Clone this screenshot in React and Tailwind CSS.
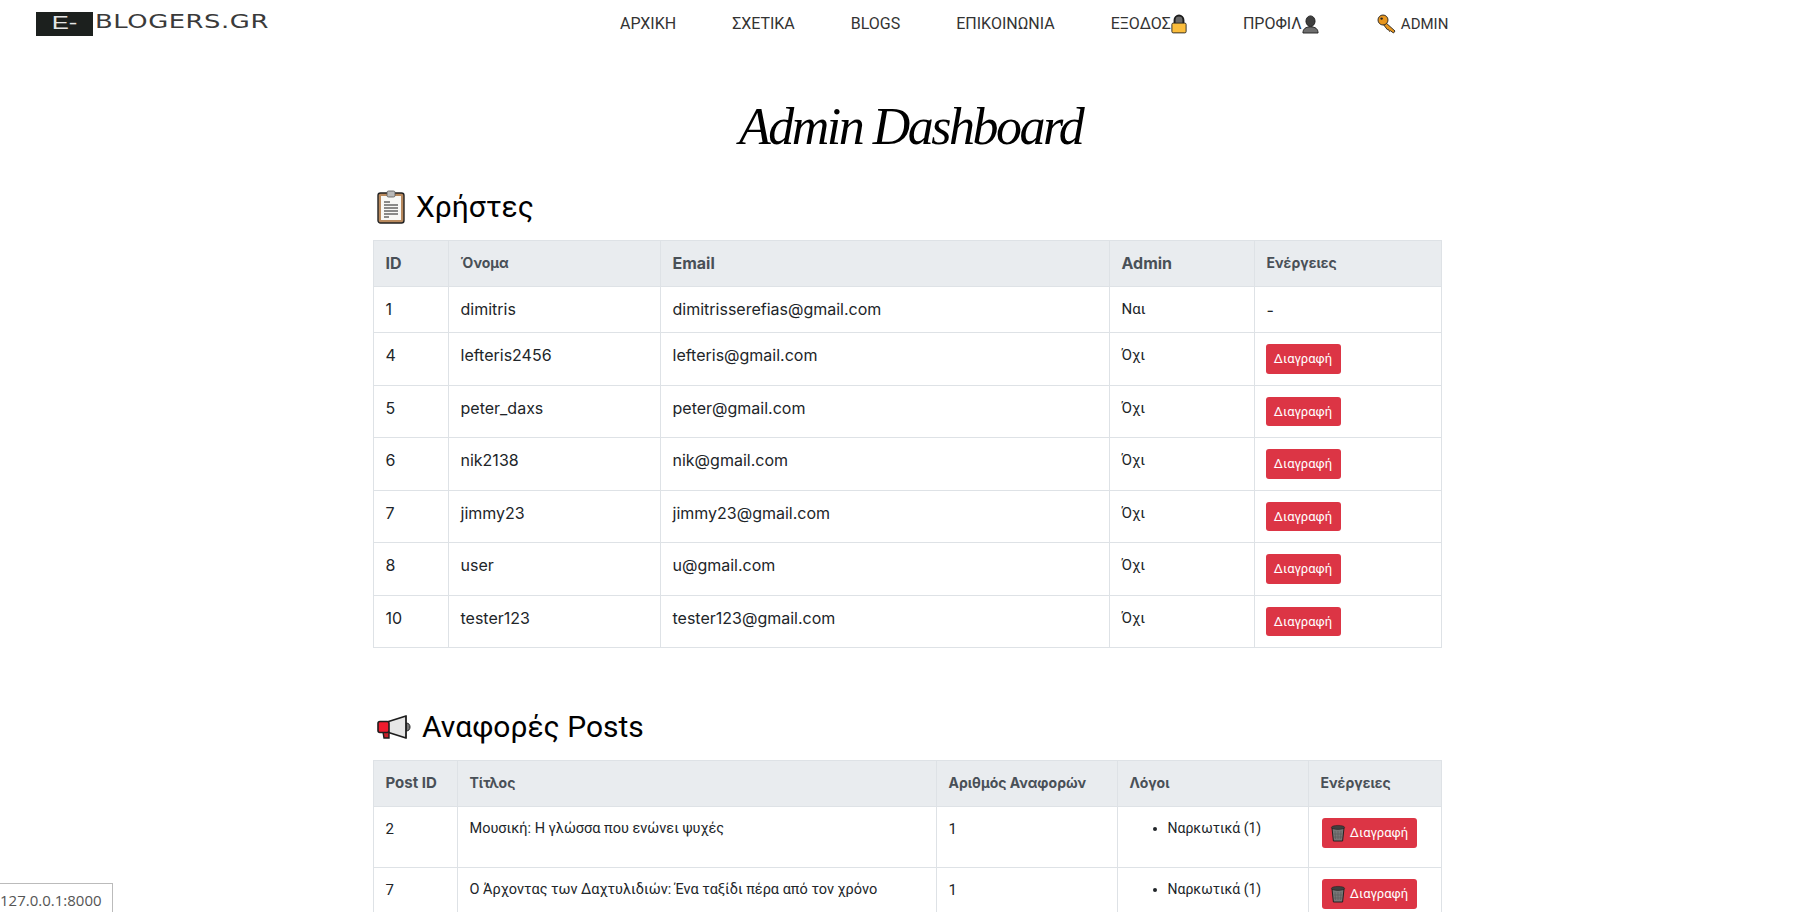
import React from 'react'

function LockIcon() {
  return (
    <svg viewBox="0 0 18 22" className="w-[16px] h-[20px] shrink-0">
      <path d="M4 11V6.5a5 5 0 0 1 10 0V11z" fill="#6a6a6a" stroke="#1d1d1d" strokeWidth="2.2" />
      <rect x="1" y="10" width="16" height="11" rx="1.5" fill="#fbbd3c" stroke="#222" strokeWidth="1" />
    </svg>
  )
}

function BustIcon() {
  return (
    <svg viewBox="0 0 18 20" className="w-[17px] h-[19px] shrink-0">
      <path d="M1 19c0-4.5 3-6.5 8-6.5s8 2 8 6.5z" fill="#6e6e6e" stroke="#222" strokeWidth="1" />
      <ellipse cx="9" cy="6.5" rx="4.8" ry="5.6" fill="#3f3f3f" stroke="#1d1d1d" strokeWidth="1" />
    </svg>
  )
}

function KeyIcon() {
  return (
    <svg viewBox="0 0 20 20" className="w-[20px] h-[20px] shrink-0">
      <path d="M8 8l10 9-1.5 2-3-2.2-1 .6-1.2-2-1 .2L6 10z" fill="#e8961e" stroke="#222" strokeWidth="0.9" strokeLinejoin="round" />
      <circle cx="6" cy="6" r="5" fill="#e8961e" stroke="#222" strokeWidth="0.9" />
      <circle cx="4.6" cy="4.6" r="1.2" fill="#222" />
    </svg>
  )
}

function ClipboardIcon() {
  return (
    <svg viewBox="0 0 28 34" className="w-[28px] h-[34px] shrink-0">
      <rect x="1" y="3" width="26" height="30" rx="2.5" fill="#b98a5e" stroke="#222" strokeWidth="1.4" />
      <rect x="4" y="6" width="20" height="24" fill="#f8f8f6" />
      <rect x="10" y="1" width="8" height="6" rx="1.5" fill="#b9b9b9" stroke="#555" strokeWidth="0.8" />
      <path d="M7 12h6M7 15h14M7 18h14M7 21h14M7 24h14M7 27h5" stroke="#666" strokeWidth="1.3" />
    </svg>
  )
}

function MegaphoneIcon() {
  return (
    <svg viewBox="0 0 34 26" className="w-[34px] h-[26px] shrink-0">
      <path d="M29 9c3 0 4 2 4 4s-1 4-4 4z" fill="#777" stroke="#222" strokeWidth="1" />
      <path d="M10 8L29 2v22L10 18z" fill="#e6e6e6" stroke="#1d1d1d" strokeWidth="1.8" strokeLinejoin="round" />
      <path d="M6 18h6v6H7z" fill="#c8202a" stroke="#1d1d1d" strokeWidth="1.4" />
      <rect x="1" y="7.5" width="11" height="11" rx="2" fill="#ee1c2e" stroke="#1d1d1d" strokeWidth="1.6" />
    </svg>
  )
}

function TrashIcon() {
  return (
    <svg viewBox="0 0 16 18" className="w-[16px] h-[18px] shrink-0">
      <path d="M2 4h12l-1.4 13H3.4z" fill="#777" stroke="#222" strokeWidth="1" />
      <ellipse cx="8" cy="3.4" rx="6.6" ry="2" fill="#3f3f3f" stroke="#222" strokeWidth="0.6" />
      <path d="M5 7l.6 8M8 7v8M11 7l-.6 8M3.5 10h9M4 13h8" stroke="#5c5c5c" strokeWidth="0.7" />
    </svg>
  )
}

const navItems = [
  { label: 'ΑΡΧΙΚΗ' },
  { label: 'ΣΧΕΤΙΚΑ' },
  { label: 'BLOGS' },
  { label: 'ΕΠΙΚΟΙΝΩΝΙΑ' },
  { label: 'ΕΞΟΔΟΣ', after: <LockIcon /> },
  { label: 'ΠΡΟΦΙΛ', after: <BustIcon /> },
  { label: 'ADMIN', before: <KeyIcon /> },
]

const users = [
  { id: 1, name: 'dimitris', email: 'dimitrisserefias@gmail.com', admin: true },
  { id: 4, name: 'lefteris2456', email: 'lefteris@gmail.com' },
  { id: 5, name: 'peter_daxs', email: 'peter@gmail.com' },
  { id: 6, name: 'nik2138', email: 'nik@gmail.com' },
  { id: 7, name: 'jimmy23', email: 'jimmy23@gmail.com' },
  { id: 8, name: 'user', email: 'u@gmail.com' },
  { id: 10, name: 'tester123', email: 'tester123@gmail.com' },
]

const reports = [
  { id: 2, title: 'Μουσική: Η γλώσσα που ενώνει ψυχές' },
  { id: 7, title: 'Ο Άρχοντας των Δαχτυλιδιών: Ένα ταξίδι πέρα από τον χρόνο' },
]

// latin text runs wider than the greek in the original, so the two get their own sizes
const th = 'border border-[#dee2e6] bg-[#e9ecef] px-[11.5px] h-[46px] text-left align-middle font-bold text-[#495057]'
const thLatin = `${th} text-[16px] pb-[2px]`
const thGreek = `${th} text-[14px] pb-[2px]`
const td = 'border border-[#dee2e6] px-[11.5px] align-top text-[#212529]'
const tdLatin = `${td} pt-[10px] text-[16px]`
const tdGreek = `${td} pt-[11px] text-[15px] font-['Roboto',sans-serif]`
const tdTitle = `${td} pt-[11px] text-[14.5px] font-['Roboto',sans-serif]`
const tdAction = `${td} pt-[11px] text-[16px]`

function DeleteButton({ children, className = '' }) {
  return (
    <button className={`flex items-center justify-center gap-[4px] h-[29.5px] rounded-[3px] bg-[#dc3545] text-white text-[13px] font-['Roboto',sans-serif] ${className}`}>
      {children}
    </button>
  )
}

export default function App() {
  return (
    <div className="relative h-screen overflow-hidden bg-white font-['Inter',sans-serif]">
      <nav className="flex items-center h-[48px]">
        <div className="flex items-center ml-[36px] w-[584px]">
          <div className="w-[57px] h-[24px] pb-[3px] bg-[#1c201e] flex items-center justify-center text-[#e5e5e5] text-[19px] leading-none font-['Liberation_Sans',sans-serif]">
            <span className="scale-x-[1.35]">E-</span>
          </div>
          <span className="ml-[2px] -mt-[6px] text-[#3a3a3a] text-[19px] leading-none tracking-[0.4px] origin-left scale-x-[1.36] font-['DejaVu_Sans',sans-serif]">BLOGERS.GR</span>
        </div>
        <ul className="flex items-center gap-[56px] text-[16px] text-[#333] font-['Roboto',sans-serif]">
          {navItems.map((item) => (
            <li key={item.label} className={`flex items-center ${item.before ? 'ml-[2px] text-[15px]' : ''}`}>
              {item.before && <span className="mr-[4px]">{item.before}</span>}
              {item.label}
              {item.after}
            </li>
          ))}
        </ul>
      </nav>

      <main className="w-[1069px] ml-[373px]">
        <h1 className="mt-[49px] ml-[366px] h-[66px] text-[52px] leading-[60px] tracking-[-2.5px] italic text-black font-['Liberation_Serif',serif] whitespace-nowrap">Admin Dashboard</h1>

        <h2 className="mt-[20px] mb-[10px] h-[47px] flex items-center text-[30px] leading-none text-black font-['Roboto',sans-serif]">
          <span className="ml-[4px] mr-[11px]"><ClipboardIcon /></span>
          Χρήστες
        </h2>
        <table className="w-full table-fixed border-collapse">
          <colgroup>
            <col className="w-[75px]" />
            <col className="w-[212px]" />
            <col className="w-[449px]" />
            <col className="w-[145px]" />
            <col />
          </colgroup>
          <thead>
            <tr>
              <th className={thLatin}>ID</th>
              <th className={thGreek}>Όνομα</th>
              <th className={thLatin}>Email</th>
              <th className={thLatin}>Admin</th>
              <th className={thGreek}>Ενέργειες</th>
            </tr>
          </thead>
          <tbody>
            {users.map((u) => (
              <tr key={u.id} className={u.admin ? 'h-[46px]' : 'h-[52.5px]'}>
                <td className={tdLatin}>{u.id}</td>
                <td className={tdLatin}>{u.name}</td>
                <td className={tdLatin}>{u.email}</td>
                <td className={tdGreek}>{u.admin ? 'Ναι' : 'Όχι'}</td>
                <td className={tdAction}>
                  {u.admin ? '-' : <DeleteButton className="w-[75px] -ml-[1px]">Διαγραφή</DeleteButton>}
                </td>
              </tr>
            ))}
          </tbody>
        </table>

        <h2 className="mt-[55px] mb-[10px] h-[47px] flex items-center text-[30px] leading-none text-black font-['Roboto',sans-serif]">
          <span className="ml-[4px] mr-[11px]"><MegaphoneIcon /></span>
          Αναφορές Posts
        </h2>
        <table className="w-full table-fixed border-collapse">
          <colgroup>
            <col className="w-[84px]" />
            <col className="w-[479px]" />
            <col className="w-[181px]" />
            <col className="w-[191px]" />
            <col />
          </colgroup>
          <thead>
            <tr>
              <th className={`${th} text-[15px]`}>Post ID</th>
              <th className={thGreek}>Τίτλος</th>
              <th className={thGreek}>Αριθμός Αναφορών</th>
              <th className={thGreek}>Λόγοι</th>
              <th className={thGreek}>Ενέργειες</th>
            </tr>
          </thead>
          <tbody>
            {reports.map((r) => (
              <tr key={r.id} className="h-[61px]">
                <td className={tdGreek}>{r.id}</td>
                <td className={tdTitle}>{r.title}</td>
                <td className={tdGreek}>1</td>
                <td className={`${td} pt-[11px] text-[14px] font-['Roboto',sans-serif]`}>
                  <ul className="list-disc pl-[38px]">
                    <li>Ναρκωτικά (1)</li>
                  </ul>
                </td>
                <td className={tdAction}>
                  <DeleteButton className="w-[95px] ml-[1px]"><TrashIcon />Διαγραφή</DeleteButton>
                </td>
              </tr>
            ))}
          </tbody>
        </table>
      </main>

      {/* browser status bubble */}
      <div className="absolute left-0 bottom-0 w-[113px] h-[29px] border-t border-r border-[#bbb] bg-white text-[15px] leading-[32px] text-[#555] font-['Open_Sans',sans-serif] whitespace-nowrap">127.0.0.1:8000</div>
    </div>
  )
}
